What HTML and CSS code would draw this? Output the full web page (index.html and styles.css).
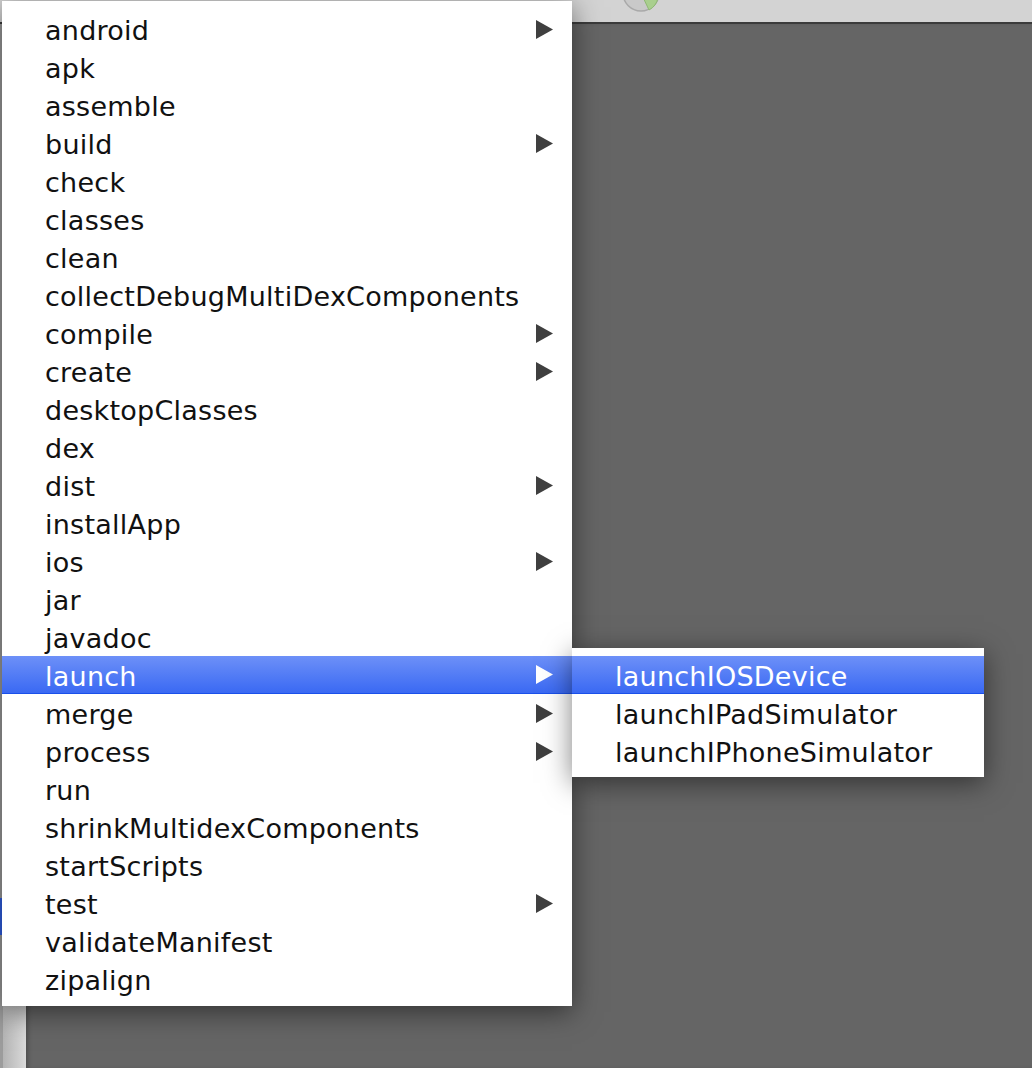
FILE: index.html
```html
<!DOCTYPE html>
<html lang="en">
<head>
  <meta charset="UTF-8">
  <meta name="viewport" content="width=device-width, initial-scale=1.0">
  <title>Gradle Tasks</title>
  <link rel="stylesheet" href="styles.css">
</head>
<body>

  <div class="desktop">
    <div class="toolbar">
      <svg class="toolbar-icon" width="40" height="22" viewBox="0 0 40 22">
        <circle cx="18" cy="-7" r="18" fill="#c9c9c9" stroke="#a9a9a9" stroke-width="1.5"/>
        <path d="M18 -7 L26 10 A18 18 0 0 0 35 -2 Z" fill="#a9cf8e" stroke="#8fb874" stroke-width="1"/>
      </svg>
    </div>
    <div class="workspace">
      <div class="sidebar">
        <div class="sidebar-mark"></div>
      </div>
      <div class="canvas"></div>
    </div>
  </div>

  <!-- task popup -->
  <ul class="menu main-menu">
    <li class="menu-item">android <svg class="arrow" viewBox="0 0 17 19"><polygon points="0,0 17,9.5 0,19"/></svg></li>
    <li class="menu-item">apk</li>
    <li class="menu-item">assemble</li>
    <li class="menu-item">build <svg class="arrow" viewBox="0 0 17 19"><polygon points="0,0 17,9.5 0,19"/></svg></li>
    <li class="menu-item">check</li>
    <li class="menu-item">classes</li>
    <li class="menu-item">clean</li>
    <li class="menu-item">collectDebugMultiDexComponents</li>
    <li class="menu-item">compile <svg class="arrow" viewBox="0 0 17 19"><polygon points="0,0 17,9.5 0,19"/></svg></li>
    <li class="menu-item">create <svg class="arrow" viewBox="0 0 17 19"><polygon points="0,0 17,9.5 0,19"/></svg></li>
    <li class="menu-item">desktopClasses</li>
    <li class="menu-item">dex</li>
    <li class="menu-item">dist <svg class="arrow" viewBox="0 0 17 19"><polygon points="0,0 17,9.5 0,19"/></svg></li>
    <li class="menu-item">installApp</li>
    <li class="menu-item">ios <svg class="arrow" viewBox="0 0 17 19"><polygon points="0,0 17,9.5 0,19"/></svg></li>
    <li class="menu-item">jar</li>
    <li class="menu-item">javadoc</li>
    <li class="menu-item selected">launch <svg class="arrow" viewBox="0 0 17 19"><polygon points="0,0 17,9.5 0,19"/></svg></li>
    <li class="menu-item">merge <svg class="arrow" viewBox="0 0 17 19"><polygon points="0,0 17,9.5 0,19"/></svg></li>
    <li class="menu-item">process <svg class="arrow" viewBox="0 0 17 19"><polygon points="0,0 17,9.5 0,19"/></svg></li>
    <li class="menu-item">run</li>
    <li class="menu-item">shrinkMultidexComponents</li>
    <li class="menu-item">startScripts</li>
    <li class="menu-item">test <svg class="arrow" viewBox="0 0 17 19"><polygon points="0,0 17,9.5 0,19"/></svg></li>
    <li class="menu-item">validateManifest</li>
    <li class="menu-item">zipalign</li>
  </ul>

  <!-- launch submenu -->
  <ul class="menu sub-menu">
    <li class="menu-item selected">launchIOSDevice</li>
    <li class="menu-item">launchIPadSimulator</li>
    <li class="menu-item">launchIPhoneSimulator</li>
  </ul>

</body>
</html>
```

FILE: styles.css
```css
body {
  margin: 0;
  font-family: "DejaVu Sans", "Liberation Sans", sans-serif;
  overflow: hidden;
}

.desktop {
  display: flex;
  flex-direction: column;
  height: 1068px;
}

.toolbar {
  height: 22px;
  background: #d3d3d3;
  border-bottom: 2px solid #3b3b3b;
  display: flex;
  padding-left: 623px;
}

.toolbar-icon {
  display: block;
}

.workspace {
  flex: 1;
  display: flex;
}

.sidebar {
  width: 23px;
  border-left: 3px solid #9c9c9c;
  background: linear-gradient(to right, #b4b4b4, #dadada);
  padding-top: 874px;
}

.sidebar-mark {
  width: 3px;
  height: 37px;
  margin-left: -3px;
  background: #2f5fe6;
}

.canvas {
  flex: 1;
  background: #656565;
  box-shadow: inset 4px 0 4px -2px rgba(0, 0, 0, 0.25);
}

.menu {
  position: absolute;
  margin: 0;
  list-style: none;
  background: #fff;
  box-shadow: 0 6px 26px rgba(0, 0, 0, 0.5);
}

.main-menu {
  left: 2px;
  top: 1px;
  width: 570px;
  padding: 9px 0 8px;
}

.sub-menu {
  left: 572px;
  top: 648px;
  width: 412px;
  padding: 8px 0 7px;
}

.menu-item {
  height: 38px;
  box-sizing: border-box;
  padding: 3px 19px 0 43px;
  line-height: 35px;
  font-size: 27px;
  letter-spacing: 0.25px;
  color: #111;
  display: flex;
  justify-content: space-between;
  align-items: center;
  white-space: nowrap;
}

.arrow {
  width: 17px;
  height: 19px;
  fill: #3f3f3f;
  margin-top: -3px;
}

.menu-item.selected {
  color: #fff;
  background: linear-gradient(to bottom, #6d90f8, #3a69f3);
  border-bottom: 1px solid #1a50ea;
}

.menu-item.selected .arrow {
  fill: #fff;
}
```
